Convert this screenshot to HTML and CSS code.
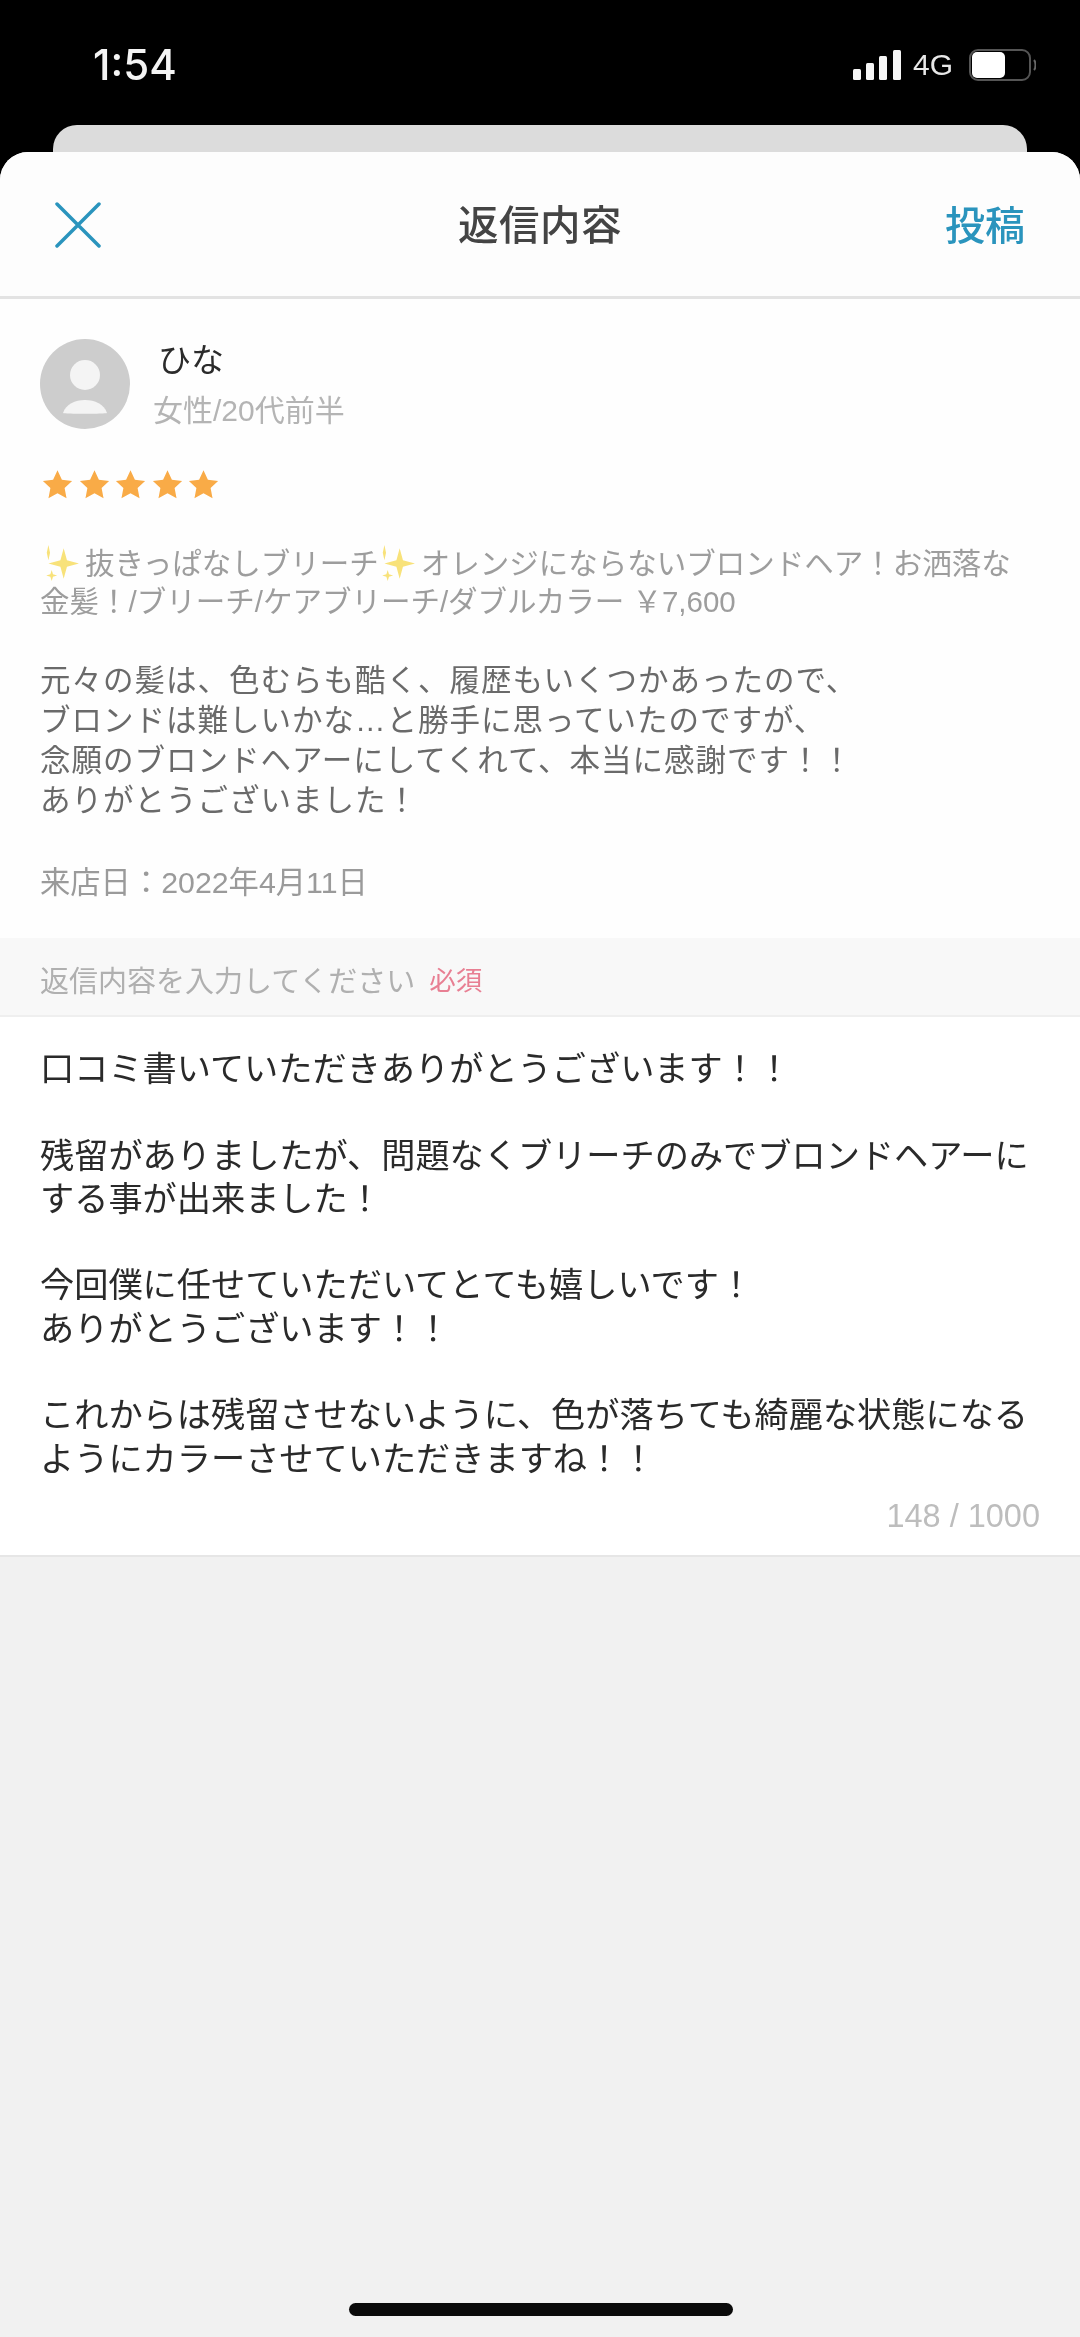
FILE: index.html
```html
<!DOCTYPE html>
<html lang="ja">
<head>
<meta charset="utf-8">
<title>返信内容</title>
<link rel="stylesheet" href="styles.css">
</head>
<body>
<div class="screen">
  <div class="status">
    <span class="time">1:54</span>
    <div class="status-right">
      <svg class="signal" width="49" height="32" viewBox="0 0 49 32"><rect x="0" y="20" width="8" height="11" rx="1.5"/><rect x="13" y="14" width="8" height="17" rx="1.5"/><rect x="26" y="7" width="8" height="24" rx="1.5"/><rect x="40" y="1" width="8" height="30" rx="1.5"/></svg>
      <span class="net">4G</span>
      <svg class="battery" width="67" height="32" viewBox="0 0 67 32"><rect x="1" y="1" width="60" height="30" rx="8" fill="none" stroke="#555" stroke-width="2"/><rect x="3" y="3" width="33" height="26" rx="5" fill="#fff"/><path d="M65 11c2 2 2 8 0 10" fill="none" stroke="#666" stroke-width="2"/></svg>
    </div>
  </div>
  <div class="back-sheet"></div>
  <div class="sheet">
    <header class="nav">
      <svg class="close" width="46" height="46" viewBox="0 0 46 46"><path d="M2 2l42 42M44 2L2 44" fill="none" stroke="#2a94bd" stroke-width="3.500" stroke-linecap="round"/></svg>
      <h1 class="title">返信内容</h1>
      <span class="post">投稿</span>
    </header>
    <section class="review">
      <div class="user">
        <svg class="avatar" width="90" height="90" viewBox="0 0 90 90"><circle cx="45" cy="45" r="45" fill="#cdcdcd"/><circle cx="45" cy="36" r="15" fill="#f4f4f4"/><path d="M23 74c3-9 12-13 22-13s19 4 22 13c-2 1-42 1-44 0z" fill="#f4f4f4"/></svg>
        <div class="user-text">
          <div class="name">ひな</div>
          <div class="meta">女性/20代前半</div>
        </div>
      </div>
      <div class="stars">
        <svg width="31" height="31" viewBox="0 0 24 24"><path class="star" d="M12 1l3.4 7.3 7.9 1-5.8 5.4 1.5 7.9-7-3.9-7 3.9 1.5-7.9L.7 9.3l7.900-1z"/></svg>
        <svg width="31" height="31" viewBox="0 0 24 24"><path class="star" d="M12 1l3.4 7.3 7.9 1-5.8 5.4 1.5 7.9-7-3.9-7 3.9 1.5-7.9L.7 9.3l7.900-1z"/></svg>
        <svg width="31" height="31" viewBox="0 0 24 24"><path class="star" d="M12 1l3.4 7.3 7.9 1-5.8 5.4 1.5 7.9-7-3.9-7 3.9 1.5-7.9L.7 9.3l7.900-1z"/></svg>
        <svg width="31" height="31" viewBox="0 0 24 24"><path class="star" d="M12 1l3.4 7.3 7.9 1-5.8 5.4 1.5 7.9-7-3.9-7 3.9 1.5-7.9L.7 9.3l7.900-1z"/></svg>
        <svg width="31" height="31" viewBox="0 0 24 24"><path class="star" d="M12 1l3.4 7.3 7.9 1-5.8 5.4 1.5 7.9-7-3.9-7 3.9 1.5-7.9L.7 9.3l7.900-1z"/></svg>
      </div>
      <p class="menu"><svg class="spark" width="35" height="36" viewBox="0 0 32 33"><path class="spark-fill" d="M18 3l3 11 11 3-11 3-3 11-3-11-11-3 11-3zM4 0l1.500 7L4 14 2.500 7zM7 23l1.200 3.800L12 28l-3.800 1.200L7 33l-1.200-3.800L2 28l3.800-1.200z"/></svg>抜きっぱなしブリーチ<svg class="spark" width="35" height="36" viewBox="0 0 32 33"><path class="spark-fill" d="M18 3l3 11 11 3-11 3-3 11-3-11-11-3 11-3zM4 0l1.500 7L4 14 2.500 7zM7 23l1.200 3.800L12 28l-3.800 1.200L7 33l-1.200-3.800L2 28l3.800-1.200z"/></svg>オレンジにならないブロンドヘア！お洒落な<br>金髪！/ブリーチ/ケアブリーチ/ダブルカラー ￥7,600</p>
      <p class="comment">元々の髪は、色むらも酷く、履歴もいくつかあったので、<br>ブロンドは難しいかな…と勝手に思っていたのですが、<br>念願のブロンドヘアーにしてくれて、本当に感謝です！！<br>ありがとうございました！</p>
      <p class="visit">来店日：2022年4月11日</p>
    </section>
    <div class="label"><span>返信内容を入力してください</span><span class="required">必須</span></div>
    <section class="reply">
      <p class="reply-text">口コミ書いていただきありがとうございます！！<br><br>残留がありましたが、問題なくブリーチのみでブロンドヘアーにする事が出来ました！<br><br>今回僕に任せていただいてとても嬉しいです！<br>ありがとうございます！！<br><br>これからは残留させないように、色が落ちても綺麗な状態になるようにカラーさせていただきますね！！</p>
      <div class="count">148 / 1000</div>
    </section>
  </div>
  <div class="home-bar"></div>
</div>
</body>
</html>
```
FILE: styles.css
```css
* { box-sizing: border-box; margin: 0; padding: 0; }
html, body { width: 1080px; height: 2337px; overflow: hidden; background: #000; }
body { font-family: "Liberation Sans", "Noto Sans CJK JP", sans-serif; }
.screen { position: relative; width: 1080px; height: 2337px; display: flex; flex-direction: column; background: #000; filter: blur(0.5px); }
.status { height: 125px; padding: 45px 44px 0 93px; display: flex; justify-content: space-between; align-items: flex-start; color: #fff; }
.time { font-family: "Inter", "Liberation Sans", sans-serif; font-size: 42px; line-height: 40px; font-weight: 500; color: #f4f4f4; }
.status-right { display: flex; align-items: center; gap: 11px; padding-top: 4px; }
.signal { display: block; }
.signal rect { fill: #f6f6f6; }
.net { font-family: "Liberation Sans", sans-serif; font-size: 30px; line-height: 32px; color: #e8e8e8; }
.battery { display: block; margin-left: 5px; }
.back-sheet { flex: none; height: 27px; margin: 0 53px; background: #dcdcdc; border-radius: 24px 24px 0 0; }
.sheet { flex: 1; display: flex; flex-direction: column; background: #f1f1f1; border-radius: 28px 28px 0 0; overflow: hidden; }
.nav { flex: none; height: 147px; padding: 3px 55px 0; display: grid; grid-template-columns: 1fr auto 1fr; align-items: center; background: #fdfdfd; border-bottom: 3px solid #e3e3e3; }
.close { display: block; margin-top: -2px; }
.title { font-size: 40.500px; font-weight: 500; color: #444; line-height: 48px; letter-spacing: 0.5px; }
.post { font-size: 40px; font-weight: 500; color: #2a94bd; line-height: 48px; justify-self: end; }
.review { flex: none; height: 639px; padding: 40px 40px 0; background: #fefefe; }
.user { display: flex; gap: 23px; align-items: flex-start; }
.avatar { flex: none; display: block; }
.user-text { margin-top: 1px; }
.name { font-size: 33px; line-height: 42px; color: #2b2b2b; padding-left: 5px; }
.meta { font-size: 30px; line-height: 42px; color: #b4b4b4; margin-top: 8px; }
.stars { display: flex; gap: 5.500px; margin-top: 37px; padding-left: 2px; }
.stars svg { display: block; }
.star { fill: #f9ab47; }
.menu { margin-top: 45px; font-size: 29.500px; line-height: 37.500px; color: #9d9d9d; white-space: nowrap; text-indent: 3px; }
.spark { vertical-align: -7px; margin: 0 6px 0 1px; }
.spark-fill { fill: #f8e27a; }
.comment { margin-top: 40px; font-size: 30.500px; line-height: 40px; color: #6a6a6a; white-space: nowrap; letter-spacing: 1px; }
.visit { margin-top: 42.500px; font-size: 30.300px; line-height: 40px; color: #9a9a9a; }
.label { flex: none; height: 79px; padding: 4px 40px 0; display: flex; align-items: center; gap: 14px; font-size: 29px; color: #b0b0b0; background: #f8f8f8; border-bottom: 2px solid #efefef; white-space: nowrap; }
.required { color: #e87f93; font-size: 26.500px; }
.reply { flex: none; height: 540px; padding: 31px 40px 0; background: #fff; border-bottom: 2px solid #e6e6e6; }
.reply-text { font-size: 34.200px; line-height: 43.300px; color: #2a2a2a; }
.count { margin-top: 17px; text-align: right; font-size: 32.500px; line-height: 36px; color: #bdbdbd; }
.home-bar { position: absolute; left: 349px; bottom: 21px; width: 384px; height: 13px; border-radius: 7px; background: #0a0a0a; }
```
